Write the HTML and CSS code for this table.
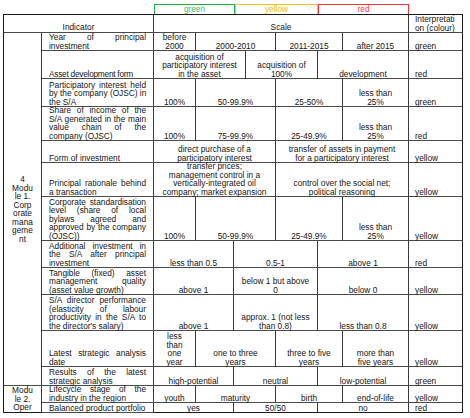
FILE: index.html
```html
<!DOCTYPE html>
<html lang="en">
<head>
<meta charset="utf-8">
<title>Indicator scale</title>
<link rel="stylesheet" href="styles.css">
</head>
<body>
<div class="page">
  <div class="legend">
    <div class="key key-green">green</div>
    <div class="key key-yellow">yellow</div>
    <div class="key key-red">red</div>
  </div>
  <div class="sheet">
    <!-- header -->
    <div class="c s2 hd">Indicator</div>
    <div class="c s7 hd">Scale</div>
    <div class="c it hd-it">Interpretati<br>on (colour)</div>

    <div class="c mod mod1">4<br>Modu<br>le 1.<br>Corp<br>orate<br>mana<br>geme<br>nt</div>

    <!-- Year -->
    <div class="c ind"><span>Year of principal</span><span>investment</span></div>
    <div class="c">before<br>2000</div>
    <div class="c s3">2000-2010</div>
    <div class="c s2">2011-2015</div>
    <div class="c">after 2015</div>
    <div class="c it">green</div>

    <!-- Asset -->
    <div class="c ind"><span class="narrow">Asset development form</span></div>
    <div class="c s3">acquisition of<br>participatory interest<br>in the asset</div>
    <div class="c s2">acquisition of<br>100%</div>
    <div class="c s2">development</div>
    <div class="c it">red</div>

    <!-- Participatory -->
    <div class="c ind"><span>Participatory interest held</span><span>by the company (OJSC) in</span><span>the S/A</span></div>
    <div class="c">100%</div>
    <div class="c s3">50-99.9%</div>
    <div class="c s2">25-50%</div>
    <div class="c">less than<br>25%</div>
    <div class="c it">green</div>

    <!-- Share -->
    <div class="c ind"><span>Share of income of the</span><span>S/A generated in the main</span><span>value chain of the</span><span>company (OJSC)</span></div>
    <div class="c">100%</div>
    <div class="c s3">75-99.9%</div>
    <div class="c s2">25-49.9%</div>
    <div class="c">less than<br>25%</div>
    <div class="c it">red</div>

    <!-- Form -->
    <div class="c ind"><span>Form of investment</span></div>
    <div class="c s4">direct purchase of a<br>participatory interest</div>
    <div class="c s3">transfer of assets in payment<br>for a participatory interest</div>
    <div class="c it">yellow</div>

    <!-- Principal -->
    <div class="c ind"><span>Principal rationale behind</span><span>a transaction</span></div>
    <div class="c s4">transfer prices;<br>management control in a<br>vertically-integrated oil<br>company; market expansion</div>
    <div class="c s3">control over the social net;<br>political reasoning</div>
    <div class="c it">yellow</div>

    <!-- Corporate -->
    <div class="c ind"><span>Corporate standardisation</span><span>level (share of local</span><span>bylaws agreed and</span><span>approved by the company</span><span>(OJSC))</span></div>
    <div class="c">100%</div>
    <div class="c s3">50-99.9%</div>
    <div class="c s2">25-49.9%</div>
    <div class="c">less than<br>25%</div>
    <div class="c it">yellow</div>

    <!-- Additional -->
    <div class="c ind"><span>Additional investment in</span><span>the S/A after principal</span><span>investment</span></div>
    <div class="c s2">less than 0.5</div>
    <div class="c s3">0.5-1</div>
    <div class="c s2">above 1</div>
    <div class="c it">red</div>

    <!-- Tangible -->
    <div class="c ind"><span>Tangible (fixed) asset</span><span>management quality</span><span>(asset value growth)</span></div>
    <div class="c s2">above 1</div>
    <div class="c s3">below 1 but above<br>0</div>
    <div class="c s2">below 0</div>
    <div class="c it">yellow</div>

    <!-- Director -->
    <div class="c ind"><span>S/A director performance</span><span>(elasticity of labour</span><span>productivity in the S/A to</span><span>the director's salary)</span></div>
    <div class="c s2">above 1</div>
    <div class="c s3">approx. 1 (not less<br>than 0.8)</div>
    <div class="c s2">less than 0.8</div>
    <div class="c it">yellow</div>

    <!-- Latest -->
    <div class="c ind"><span>Latest strategic analysis</span><span>date</span></div>
    <div class="c">less<br>than<br>one<br>year</div>
    <div class="c s3">one to three<br>years</div>
    <div class="c s2">three to five<br>years</div>
    <div class="c">more than<br>five years</div>
    <div class="c it">yellow</div>

    <!-- Results -->
    <div class="c ind"><span>Results of the latest</span><span>strategic analysis</span></div>
    <div class="c s2">high-potential</div>
    <div class="c s3">neutral</div>
    <div class="c s2">low-potential</div>
    <div class="c it">green</div>

    <div class="c mod mod2">Modu<br>le 2.<br>Oper</div>

    <!-- Lifecycle -->
    <div class="c ind"><span>Lifecycle stage of the</span><span>industry in the region</span></div>
    <div class="c">youth</div>
    <div class="c s3">maturity</div>
    <div class="c s2">birth</div>
    <div class="c">end-of-life</div>
    <div class="c it">yellow</div>

    <!-- Balanced -->
    <div class="c ind"><span>Balanced product portfolio</span></div>
    <div class="c s2">yes</div>
    <div class="c s3">50/50</div>
    <div class="c s2">no</div>
    <div class="c it">red</div>
  </div>
</div>
</body>
</html>
```

FILE: styles.css
```css
* { box-sizing: border-box; }

html, body {
  margin: 0;
  padding: 0;
  background: #ffffff;
}

body {
  font-family: "Liberation Sans", Arial, sans-serif;
  font-size: 8.3px;
  line-height: 8.5px;
  color: #141414;
  overflow: hidden;
}

.page {
  padding: 4px 0 0 3px;
}

.legend {
  display: flex;
  margin-left: 151px;
  height: 10px;
}

.key {
  height: 10px;
  border-style: solid;
  border-width: 1px 1px 0 1px;
  text-align: center;
  line-height: 9px;
}

.key-green {
  width: 81px;
  border-color: #19b24b;
  color: #3dbb5e;
}

.key-yellow {
  width: 83px;
  border-color: #ffc21a;
  color: #f5b900;
}

.key-red {
  width: 91px;
  border-color: #f0343a;
  color: #ee3b3f;
}

.sheet {
  display: grid;
  grid-template-columns: 38px 112px 42px 38px 12px 30px 42px 25px 66px 54px;
  grid-template-rows: 18px 18px 28px 28px 34px 22px 34px 44px 27px 27px 36px 36px 19px 17px 10px;
  width: 460px;
  border-top: 1px solid #1a1a1a;
  border-left: 1px solid #1a1a1a;
}

.c {
  display: flex;
  flex-direction: column;
  justify-content: flex-end;
  text-align: center;
  white-space: nowrap;
  padding: 0 2px;
  border-right: 1px solid #3a3a3a;
  border-bottom: 1px solid #4a4a4a;
  min-width: 0;
}

.s2 { grid-column: span 2; }
.s3 { grid-column: span 3; }
.s4 { grid-column: span 4; }
.s7 { grid-column: span 7; }

.hd {
  padding-bottom: 1px;
}

.it {
  text-align: left;
  padding-left: 6px;
  border-right-color: #1a1a1a;
}

.hd-it {
  justify-content: center;
}

.ind {
  text-align: left;
  white-space: normal;
  padding: 0 7px 0 7px;
}

.ind span {
  display: block;
  white-space: nowrap;
  text-align: justify;
  text-align-last: justify;
}

.ind span:last-child {
  text-align-last: left;
}

.ind .narrow {
  letter-spacing: -0.25px;
}

.mod {
  justify-content: center;
  padding: 0;
}

.mod1 {
  grid-row: span 12;
}

.mod2 {
  grid-row: span 2;
  justify-content: flex-start;
  line-height: 8.6px;
  border-bottom-color: #1a1a1a;
}

.sheet > .c:nth-last-child(-n+4) {
  border-bottom-color: #1a1a1a;
}
```
